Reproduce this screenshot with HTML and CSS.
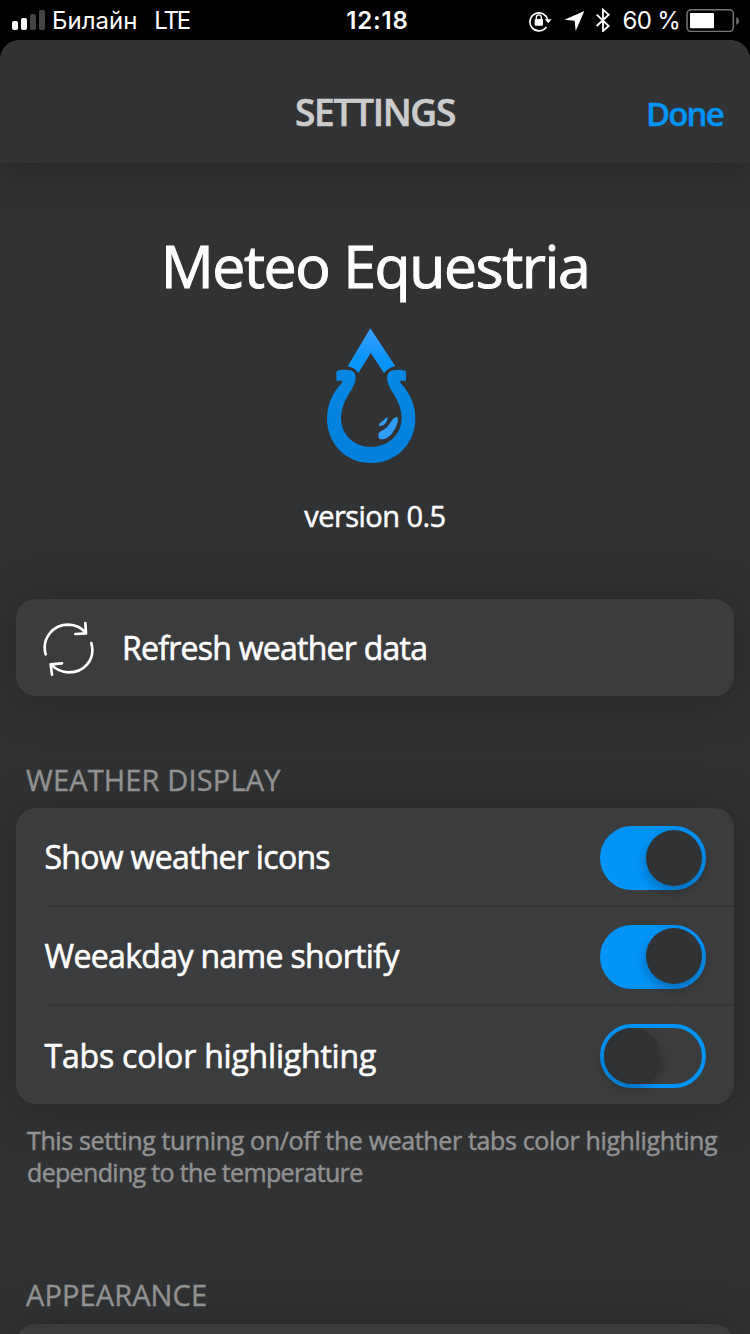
FILE: index.html
```
<!DOCTYPE html>
<html lang="en">
<head>
<meta charset="utf-8">
<title>Settings</title>
<link rel="stylesheet" href="styles.css">
</head>
<body>
<div class="status">
  <div class="status-left">
    <svg class="signal" width="34" height="22" viewBox="0 0 34 22"><rect x="0" y="12" width="6" height="9" rx="2" fill="#fff"/><rect x="9" y="9" width="6" height="12" rx="2" fill="#fff"/><rect x="18" y="5" width="6" height="16" rx="2" fill="#444"/><rect x="27" y="1" width="6" height="20" rx="2" fill="#444"/></svg>
    <span class="carrier">Билайн</span>
    <span class="network">LTE</span>
  </div>
  <div class="clock">12:18</div>
  <div class="status-right">
    <svg class="indicators" width="84" height="24" viewBox="0 0 252 72">
      <g transform="translate(-84 -23)">
        <path d="M139 80A27 27 0 1 1 143 58" fill="none" stroke="#fff" stroke-width="5"/>
        <path d="M134 57h21l-10 12z" fill="#fff"/>
        <rect x="104" y="56" width="25" height="20" rx="3" fill="#fff"/>
        <path d="M109 57v-6a7.500 7.500 0 0 1 15 0v6" fill="none" stroke="#fff" stroke-width="4"/>
        <path d="M253 32L193 58l31 3 3 31z" fill="#fff"/>
        <path d="M290 43l36 34-17 15V28l17 15-36 34" fill="none" stroke="#fff" stroke-width="5.500"/>
      </g>
    </svg>
    <span class="percent">60 %</span>
    <svg class="battery" width="54" height="24" viewBox="0 0 162 72"><rect x="3" y="5.500" width="139" height="65" rx="12" fill="none" stroke="#777" stroke-width="4.500"/><rect x="12" y="15" width="72" height="46" rx="3" fill="#fff"/><path d="M151 27q8 4 8 12t-8 12z" fill="#777"/></svg>
  </div>
</div>
<main class="sheet">
  <header class="header">
    <span></span>
    <h1 class="heading">SETTINGS</h1>
    <span class="done">Done</span>
  </header>
  <section class="about">
    <h2 class="app-name">Meteo Equestria</h2>
    <svg class="logo" width="130" height="150" viewBox="0 0 390 450">
      <defs>
        <linearGradient id="tip" x1="0" y1="0" x2="0" y2="1"><stop offset="0" stop-color="#3aa0fb"/><stop offset=".65" stop-color="#0a94fb"/><stop offset="1" stop-color="#0593f8"/></linearGradient>
        <linearGradient id="shoe" x1="0" y1="0" x2="0" y2="1"><stop offset="0" stop-color="#0587e4"/><stop offset="1" stop-color="#0080dc"/></linearGradient>
      </defs>
      <path d="M181 25L256 139Q236 142 222 159L182 99L145 159Q134 143 113 139Z" fill="url(#tip)"/>
      <path d="M79 158Q79 152 86 151Q103 148 121 151Q137 155 137 174Q137 191 118 219Q93 259 93 294C93 345 134 381 183 381C233 381 275 345 275 294Q275 259 249 219Q231 191 231 174Q231 155 248 151Q265 148 281 151Q288 152 288 158V182H271V188Q316 236 316 296C316 371 258 429 183 429C109 429 51 371 51 296Q51 236 96 188V182H79Z" fill="url(#shoe)"/>
      <path d="M205 346Q205 337 218 331Q233 323 244 303Q251 292 259 291Q266 293 263 306Q258 326 245 342Q230 359 214 358Q204 357 205 346ZM207 314Q209 308 217 304Q222 301 226 295Q230 291 233 293Q233 300 228 308Q220 318 210 319Q207 318 207 314Z" fill="#2f9dfb"/>
    </svg>
    <p class="version">version 0.5</p>
  </section>
  <div class="card refresh">
    <svg class="refresh-icon" width="52" height="56" viewBox="0 0 156 168"><g transform="translate(-130 -92)" fill="none" stroke="#fff" stroke-width="8" stroke-linecap="round" stroke-linejoin="round"><path d="M138 192C125 144 160 103 206 103Q238 104 258 127M257 98l2 31-32 2M275 158C289 209 252 246 207 246Q176 245 154 222M187 219l-34 3 4 31"/></g></svg>
    <span class="label refresh-label">Refresh weather data</span>
  </div>
  <h3 class="section">WEATHER DISPLAY</h3>
  <div class="card list">
    <div class="row"><span class="label icons-label">Show weather icons</span><span class="toggle on"><i class="knob"></i></span></div>
    <div class="row"><span class="label weekday-label">Weeakday name shortify</span><span class="toggle on raised"><i class="knob"></i></span></div>
    <div class="row"><span class="label tabs-label">Tabs color highlighting</span><span class="toggle off"><i class="knob"></i></span></div>
  </div>
  <p class="note"><span class="note-first">This setting turning on/off the weather tabs color highlighting</span><br><span class="note-second">depending to the temperature</span></p>
  <h3 class="section appearance">APPEARANCE</h3>
  <div class="card next"></div>
</main>
</body>
</html>
```
FILE: styles.css
```
* { box-sizing: border-box; }
body { margin: 0; width: 750px; height: 1334px; overflow: hidden; background: #000; color: #fff; font-family: "Open Sans", "Noto Sans", sans-serif; }
h1, h2, h3, p { margin: 0; font-weight: 400; white-space: nowrap; }
svg { display: block; flex: none; }
.status { height: 40px; display: grid; grid-template-columns: 1fr auto 1fr; align-items: center; font-family: Inter, sans-serif; font-size: 24px; line-height: 38px; white-space: nowrap; }
.status span, .clock { padding-top: 2px; }
.status-left { display: flex; align-items: center; padding-left: 12px; }
.signal { margin-right: 6px; }
.carrier { letter-spacing: 0; margin-right: 17px; }
.network { letter-spacing: -2.2px; }
.clock { font-weight: 600; letter-spacing: .8px; padding-left: 5px; }
.status-right { display: flex; align-items: center; justify-content: flex-end; padding-right: 10px; }
.indicators { margin-top: -1px; }
.percent { margin: 0 6px 0 10px; letter-spacing: -.7px; }
.sheet { height: 1294px; overflow: hidden; background: #313234; border-radius: 20px 20px 0 0; }
.header { height: 123px; display: grid; grid-template-columns: 1fr auto 1fr; align-items: center; padding: 20px 28px 0; background: #323335; box-shadow: 0 4px 40px rgba(0,0,0,.28); }
.heading { color: #ccc; font-size: 37px; font-weight: 600; line-height: 40px; letter-spacing: -1.3px; -webkit-text-stroke: .6px; }
.done { color: #0094f8; font-size: 33px; font-weight: 600; line-height: 40px; letter-spacing: -1.8px; -webkit-text-stroke: .4px; justify-self: end; padding-top: 5px; margin-right: -1px; }
.about { height: 436px; display: flex; flex-direction: column; align-items: center; padding-top: 62px; }
.app-name { font-size: 59px; line-height: 80px; letter-spacing: -1.45px; -webkit-text-stroke: 1px; }
.logo { margin: 15px 0 0; }
.version { font-size: 29px; line-height: 40px; margin-top: 26px; letter-spacing: -.55px; -webkit-text-stroke: .5px; }
.card { margin: 0 16px; background: #3b3c3e; border-radius: 20px; box-shadow: 0 4px 50px rgba(0,0,0,.25); }
.refresh { height: 97px; display: flex; align-items: center; padding-left: 27px; gap: 27px; }
.refresh-icon { margin-top: 2px; }
.label { font-size: 32px; line-height: 42px; padding-top: 1px; white-space: nowrap; -webkit-text-stroke: .6px; }
.refresh-label { letter-spacing: -.75px; }
.icons-label { letter-spacing: -.7px; }
.weekday-label { letter-spacing: -.65px; }
.tabs-label { letter-spacing: -.2px; }
.section { color: #919191; font-size: 29px; line-height: 40px; padding-left: 26px; margin-top: 64px; letter-spacing: .15px; -webkit-text-stroke: .4px; }
.list { height: 296px; margin-top: 8px; padding-left: 28.5px; }
.row { height: 99px; display: flex; align-items: center; justify-content: space-between; padding-right: 28.5px; border-bottom: 2px solid #353638; }
.row:last-child { border-bottom: 0; }
.toggle { width: 106px; height: 64px; margin-top: 2px; border: 4px solid #0094f8; border-radius: 32px; display: flex; align-items: center; }
.on { background: #0094f8; justify-content: flex-end; }
.off { margin-top: 0; }
.raised .knob { margin-top: -2px; }
.knob { width: 56px; height: 56px; border-radius: 50%; background: #313234; box-shadow: 0 5px 12px rgba(0,0,0,.28); }
.note { color: #919191; font-size: 25px; line-height: 32px; padding-left: 27px; margin-top: 20px; -webkit-text-stroke: .5px; }
.note-first { letter-spacing: -.37px; }
.note-second { letter-spacing: -.67px; }
.appearance { margin-top: 87px; letter-spacing: .1px; }
.next { height: 90px; margin-top: 9px; }
```
